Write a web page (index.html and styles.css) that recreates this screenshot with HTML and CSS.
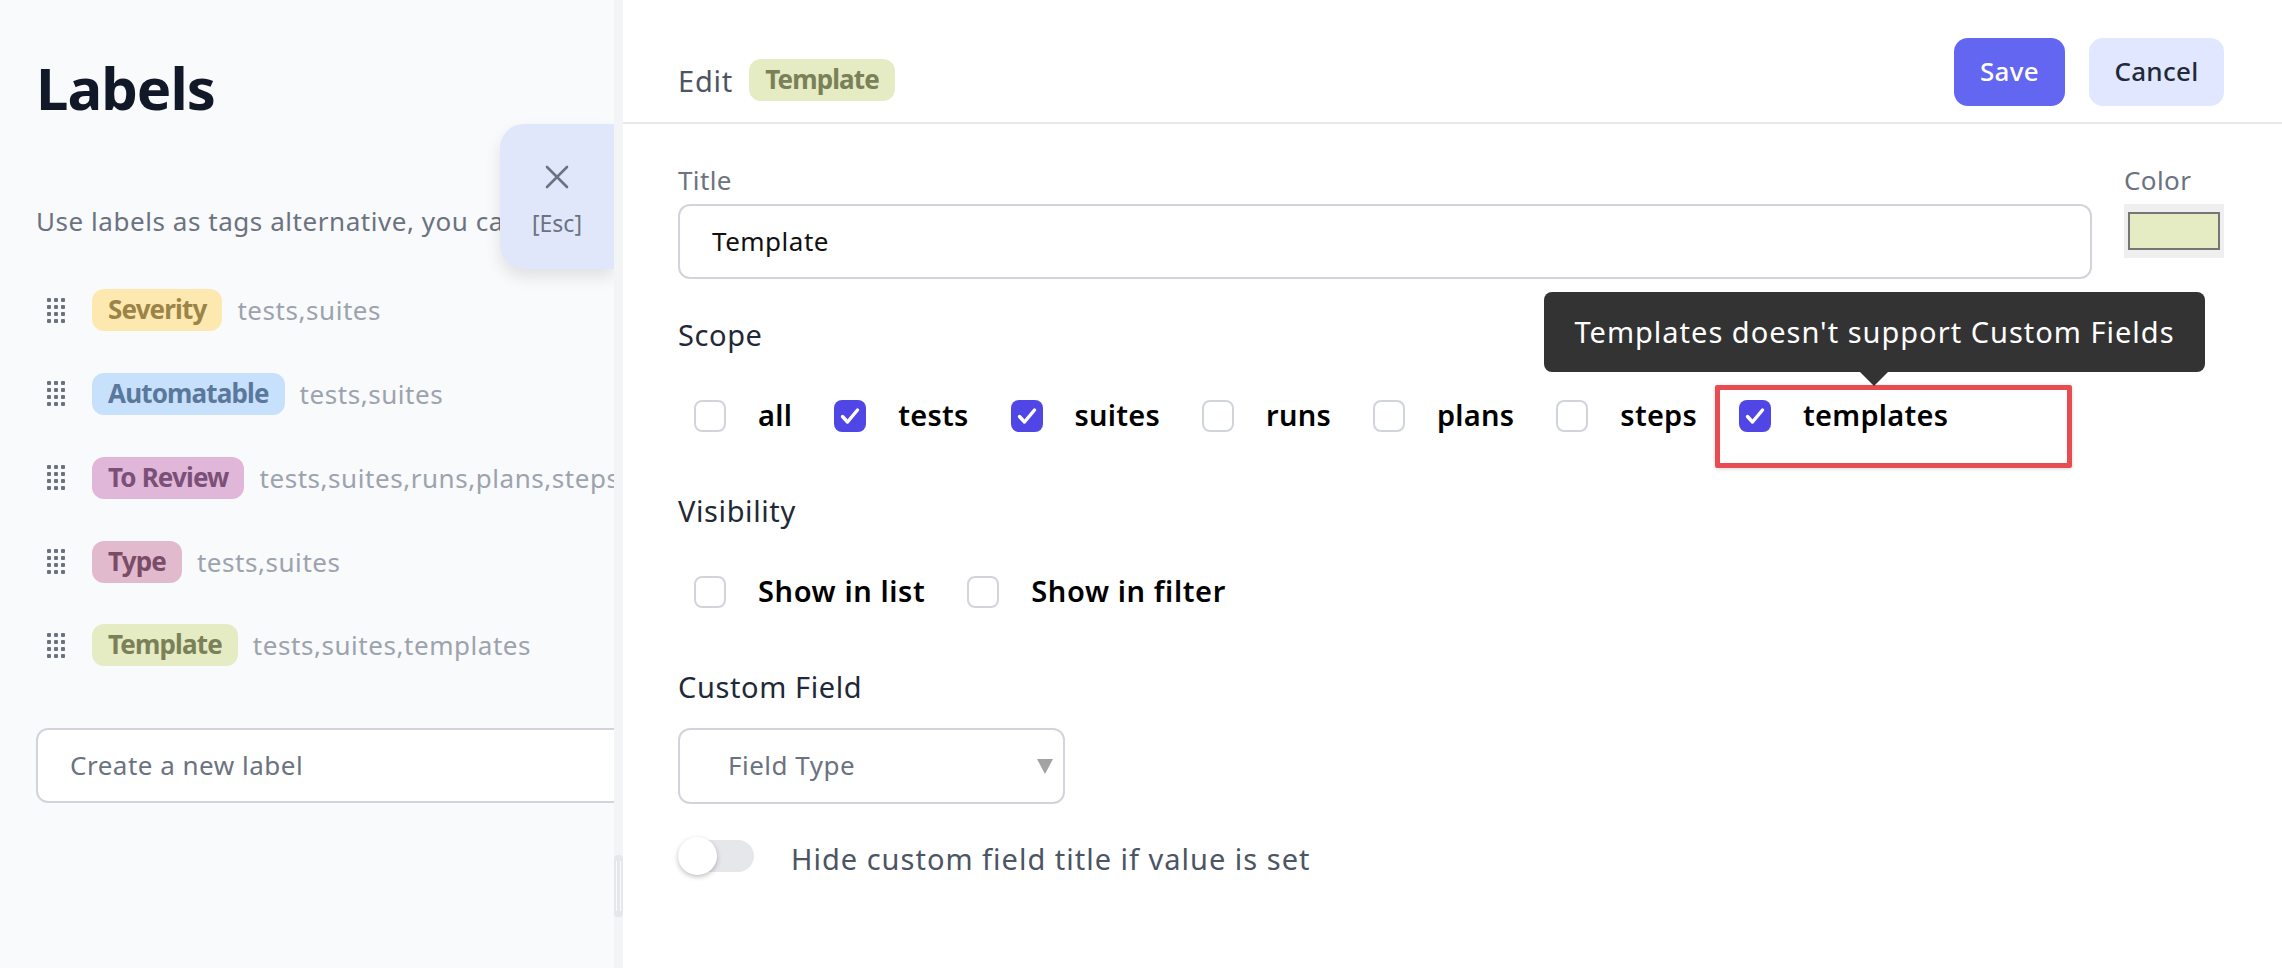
FILE: index.html
```html
<!DOCTYPE html>
<html>
<head>
    <meta charset="UTF-8">
    <title>Labels</title>
    <link rel="stylesheet" href="styles.css">
</head>
<body>
<svg class="defs" width="0" height="0">
    <symbol id="dots" viewBox="0 0 18 25">
        <g fill="#6b7280">
            <rect x="0" y="0" width="4" height="4" rx="1"/><rect x="7" y="0" width="4" height="4" rx="1"/><rect x="14" y="0" width="4" height="4" rx="1"/>
            <rect x="0" y="7" width="4" height="4" rx="1"/><rect x="7" y="7" width="4" height="4" rx="1"/><rect x="14" y="7" width="4" height="4" rx="1"/>
            <rect x="0" y="14" width="4" height="4" rx="1"/><rect x="7" y="14" width="4" height="4" rx="1"/><rect x="14" y="14" width="4" height="4" rx="1"/>
            <rect x="0" y="21" width="4" height="4" rx="1"/><rect x="7" y="21" width="4" height="4" rx="1"/><rect x="14" y="21" width="4" height="4" rx="1"/>
        </g>
    </symbol>
    <symbol id="tick" viewBox="0 0 32 32">
        <path d="M8.5 16.5l5 5.5L23.5 10" fill="none" stroke="#fff" stroke-width="3.4" stroke-linecap="round" stroke-linejoin="round"/>
    </symbol>
</svg>

<div class="left">
    <h1 class="title">Labels</h1>
    <p class="desc">Use labels as tags alternative, you ca</p>
    <ul class="labels">
        <li><svg class="dots"><use href="#dots"/></svg><span class="tag severity">Severity</span><span class="scopes">tests,suites</span></li>
        <li><svg class="dots"><use href="#dots"/></svg><span class="tag automatable">Automatable</span><span class="scopes">tests,suites</span></li>
        <li><svg class="dots"><use href="#dots"/></svg><span class="tag review">To Review</span><span class="scopes">tests,suites,runs,plans,steps</span></li>
        <li><svg class="dots"><use href="#dots"/></svg><span class="tag type">Type</span><span class="scopes">tests,suites</span></li>
        <li><svg class="dots"><use href="#dots"/></svg><span class="tag template">Template</span><span class="scopes">tests,suites,templates</span></li>
    </ul>
    <div class="newlabel">Create a new label</div>
    <div class="close">
        <svg width="24" height="24" viewBox="0 0 24 24"><path d="M2 2l20 20M22 2L2 22" stroke="#6b7280" stroke-width="2.6" stroke-linecap="round"/></svg>
        <span>[Esc]</span>
    </div>
</div>

<div class="gutter"><div class="handle"></div></div>

<div class="right">
    <div class="head">
        <div class="head-title">
            <span class="edit">Edit</span>
            <span class="tag template">Template</span>
        </div>
        <div class="btn save">Save</div>
        <div class="btn cancel">Cancel</div>
    </div>

    <div class="form">
        <div class="title-row">
            <div>
                <div class="small-label">Title</div>
                <div class="field title-field">Template</div>
            </div>
            <div>
                <div class="small-label">Color</div>
                <div class="swatch"><div class="swatch-in"></div></div>
            </div>
        </div>

        <div class="section scope-label">Scope</div>
        <div class="checks scope">
            <div class="check"><span class="box"></span><b>all</b></div>
            <div class="check"><span class="box on"><svg><use href="#tick"/></svg></span><b>tests</b></div>
            <div class="check"><span class="box on"><svg><use href="#tick"/></svg></span><b>suites</b></div>
            <div class="check"><span class="box"></span><b>runs</b></div>
            <div class="check"><span class="box"></span><b>plans</b></div>
            <div class="check"><span class="box"></span><b>steps</b></div>
            <div class="check"><span class="box on"><svg><use href="#tick"/></svg></span><b>templates</b></div>
            <div class="redbox"></div>
            <div class="tooltip">Templates doesn't support Custom Fields</div>
        </div>

        <div class="section vis-label">Visibility</div>
        <div class="checks vis">
            <div class="check"><span class="box"></span><b>Show in list</b></div>
            <div class="check"><span class="box"></span><b>Show in filter</b></div>
        </div>

        <div class="section field-label">Custom Field</div>
        <div class="field select">Field Type<span class="arrow"></span></div>

        <div class="toggle-row">
            <div class="toggle"><div class="knob"></div></div>
            <span class="toggle-text">Hide custom field title if value is set</span>
        </div>
    </div>
</div>
</body>
</html>
```

FILE: styles.css
```css
html,body{margin:0;padding:0;height:968px;overflow:hidden;}
body{display:flex;font-family:"Noto Sans","Open Sans",sans-serif;font-size:27px;color:#1f2937;background:#fff;}
.defs{position:absolute;}

/* left panel */
.left{position:relative;width:614px;height:968px;flex:none;padding-left:36px;box-sizing:border-box;background:#f9fafb;overflow:hidden;}
.title{margin:52px 0 0;font-size:58px;line-height:72px;font-weight:700;color:#111827;letter-spacing:-1px;}
.desc{margin:79px 0 0;font-size:26px;line-height:36px;color:#6b7280;white-space:nowrap;letter-spacing:.55px;}
.labels{margin:50px 0 0;padding:0;list-style:none;display:flex;flex-direction:column;gap:41.85px;}
.labels li{display:flex;align-items:center;height:42px;white-space:nowrap;}
.dots{width:18px;height:25px;margin:0 27px 0 11px;flex:none;}
.tag{display:inline-block;height:42px;line-height:41px;padding:0 16px;box-sizing:border-box;border-radius:12px;font-size:26px;font-weight:700;letter-spacing:-.85px;}
.severity{background:#fde9b0;color:#9c8448;}
.automatable{background:#c7e0fb;color:#5a789b;}
.review{background:#e0b7d9;color:#7a5078;}
.type{background:#e2bacd;color:#7b4c68;}
.template{background:#e5ebc3;color:#7a8058;}
.scopes{margin-left:15px;font-size:26px;color:#9ca3af;letter-spacing:.55px;}
.newlabel{width:700px;height:75px;line-height:71px;margin-top:62px;padding-left:32px;box-sizing:border-box;border:2px solid #d1d5db;border-radius:12px;background:#fff;font-size:26px;letter-spacing:.5px;color:#6b7280;}
.close{position:absolute;left:500px;top:124px;width:114px;height:145px;box-sizing:border-box;padding-top:41px;display:flex;flex-direction:column;align-items:center;background:#e1e7fb;border-radius:24px 0 0 24px;box-shadow:0 8px 16px rgba(0,0,0,.1);font-size:23px;color:#6b7280;}
.close span{margin-top:19px;line-height:30px;}

.gutter{position:relative;width:9px;flex:none;background:#f3f4f6;}
.handle{position:absolute;left:0;top:855px;width:9px;height:62px;border-radius:4px;background:#e5e7eb;}
.handle::after{content:"";position:absolute;left:2px;top:6px;width:5px;height:50px;box-sizing:border-box;border:1px solid #f9fafb;border-width:0 1px;}

/* right panel */
.right{flex:1;min-width:0;}
.head{display:flex;align-items:center;box-sizing:border-box;height:124px;padding:21px 58px 0 55px;border-bottom:2px solid #e5e7eb;}
.head-title{flex:1;display:flex;align-items:center;gap:16px;padding-top:17px;font-size:29px;color:#4b5563;}
.edit{letter-spacing:.8px;}
.btn{height:68px;line-height:66px;border-radius:14px;font-size:26px;font-weight:500;text-align:center;letter-spacing:.3px;}
.save{width:111px;margin-right:24px;background:#6366f1;color:#fff;}
.cancel{width:135px;background:#e0e7ff;color:#1f2937;}

.form{padding:40px 58px 0 55px;}
.title-row{display:grid;grid-template-columns:1fr 100px;column-gap:32px;height:115px;}
.small-label{height:32px;line-height:32px;margin-bottom:8px;font-size:26px;letter-spacing:.4px;color:#6b7280;}
.field{box-sizing:border-box;height:75px;line-height:71px;border:2px solid #d1d5db;border-radius:12px;font-size:26px;letter-spacing:.5px;background:#fff;}
.title-field{padding-left:32px;color:#111;}
.swatch{height:54px;padding:8px 4px;box-sizing:border-box;background:#efefef;}
.swatch-in{height:38px;box-sizing:border-box;border:2px solid #767676;background:#e5ebc3;}

.section{height:36px;line-height:36px;font-size:29px;letter-spacing:.6px;color:#1f2937;}
.scope-label{margin-top:38px;}
.vis-label{margin-top:61px;}
.field-label{margin-top:61px;}
.checks{position:relative;display:flex;margin:47px 0 0 16px;height:32px;}
.check{display:flex;align-items:center;height:32px;margin-right:42px;white-space:nowrap;}
.check b{font-size:29px;font-weight:600;color:#000;letter-spacing:.25px;padding-bottom:3px;}
.vis b{letter-spacing:.6px;}
.box{width:32px;height:32px;box-sizing:border-box;margin-right:32px;border:2px solid #d1d5db;border-radius:8px;background:#fff;flex:none;}
.box.on{border:0;background:#4f46e5;}
.box svg{display:block;width:32px;height:32px;}
.redbox{position:absolute;left:1021px;top:-15px;width:357px;height:83px;box-sizing:border-box;border:5px solid #e84c50;border-radius:2px;box-shadow:0 1px 4px rgba(0,0,0,.15);}
.tooltip{position:absolute;left:850px;top:-108px;width:661px;height:80px;line-height:80px;text-align:center;background:#333;border-radius:8px;color:#fff;font-size:29px;letter-spacing:1px;white-space:nowrap;}
.tooltip::after{content:"";position:absolute;left:316px;top:80px;border:14px solid transparent;border-top-color:#333;border-bottom:0;}

.select{width:387px;height:76px;margin-top:23px;padding-left:48px;position:relative;color:#6b7280;}
.arrow{position:absolute;left:357px;top:29px;border:8px solid transparent;border-top:15px solid #a3a3a3;border-bottom:0;}
.toggle-row{display:flex;align-items:center;margin-top:33px;height:38px;color:#4b5563;}
.toggle{position:relative;width:76px;height:32px;margin-right:37px;background:#e5e7eb;border-radius:16px;flex:none;}
.knob{position:absolute;left:0;top:-3px;width:39px;height:38px;border-radius:50%;background:#fff;box-shadow:0 2px 5px rgba(0,0,0,.25);}
.toggle-text{font-size:29px;letter-spacing:1px;padding-top:5px;}
```
